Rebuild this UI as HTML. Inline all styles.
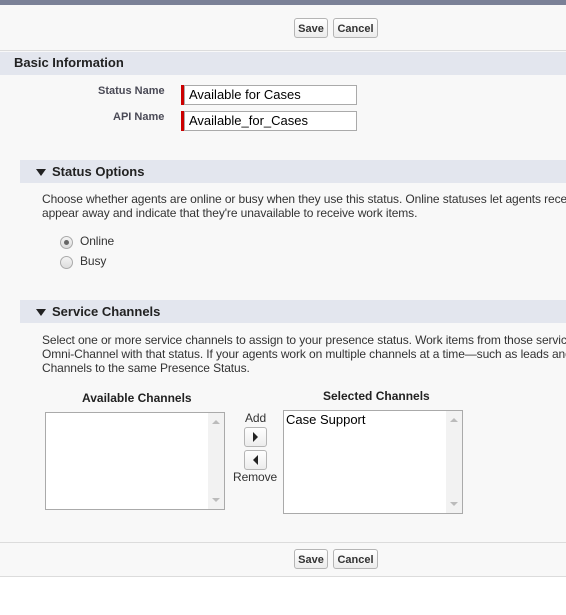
<!DOCTYPE html>
<html><head><style>
html,body{margin:0;width:566px;height:615px;overflow:hidden}
body{background:#fff;font-family:"Liberation Sans",Arial,sans-serif;color:#222;position:relative}
#w{position:absolute;left:0;top:0;width:566px;height:615px;overflow:hidden}
.a{position:absolute;white-space:nowrap}
.bg{position:absolute;left:0;top:0;width:566px;height:577px;background:#f8f8f8}
.btn{position:absolute;height:20px;border:1px solid #b5b5b5;border-radius:3px;background:linear-gradient(#fff,#ececec);font-size:11px;font-weight:bold;color:#333;line-height:20px;text-align:center;box-sizing:border-box}
.band{position:absolute;background:#e3e6ee;height:23px}
.h{font-weight:bold;font-size:13px;color:#222}
.t{font-size:12px;color:#333;letter-spacing:-0.1px}
.inp{position:absolute;width:176px;height:20px;border:1px solid #aaa;background:#fff;box-sizing:border-box;font-size:13px;line-height:18px;padding-left:4px;color:#000}
.req{position:absolute;width:3px;height:20px;background:#c00}
.lbl{font-size:11px;font-weight:bold;color:#4a4a56}
.tri{display:inline-block;width:0;height:0;border-left:5px solid transparent;border-right:5px solid transparent;border-top:7px solid #222;vertical-align:middle;margin-right:6px}
.radio{position:absolute;width:11px;height:11px;border:1px solid #aaa;border-radius:50%;background:linear-gradient(#f4f4f4,#ddd)}
.box{position:absolute;border:1px solid #aaa;background:#fff;box-sizing:border-box}
.sb{position:absolute;right:0;top:0;bottom:0;width:16px;background:#f2f2f2}
.up,.dn{position:absolute;left:4px;width:0;height:0;border-left:4px solid transparent;border-right:4px solid transparent}
.up{top:7px;border-bottom:4px solid #bbb}
.dn{bottom:7px;border-top:4px solid #bbb}
.line{position:absolute;left:0;width:566px;height:1px;background:#dcdcdc}
</style></head><body><div id="w">
<div class="bg"></div>
<div class="a" style="left:0;top:0;width:566px;height:5px;background:#7b8197"></div>
<div class="btn" style="left:294px;top:18px;width:34px">Save</div>
<div class="btn" style="left:333px;top:18px;width:45px">Cancel</div>
<div class="line" style="top:50px"></div>
<div class="band" style="left:0;top:52px;width:566px"></div>
<div class="a h" style="left:14px;top:55px">Basic Information</div>
<div class="a lbl" style="left:98px;top:85px">Status Name</div>
<div class="req" style="left:181px;top:85px"></div>
<div class="inp" style="left:184px;top:85px;width:173px">Available for Cases</div>
<div class="a lbl" style="left:113px;top:111px">API Name</div>
<div class="req" style="left:181px;top:111px"></div>
<div class="inp" style="left:184px;top:111px;width:173px">Available_for_Cases</div>

<div class="band" style="left:20px;top:160px;width:546px"></div>
<div class="a h" style="left:36px;top:164px"><span class="tri"></span>Status Options</div>
<div class="a t" style="left:42px;top:192px;width:524px;overflow:hidden">Choose whether agents are online or busy when they use this status. Online statuses let agents receive work items.</div>
<div class="a t" style="left:42px;top:206px">appear away and indicate that they're unavailable to receive work items.</div>
<div class="radio" style="left:60px;top:236px"><div style="position:absolute;left:3px;top:3px;width:5px;height:5px;border-radius:50%;background:#666"></div></div>
<div class="a t" style="left:80px;top:234px">Online</div>
<div class="radio" style="left:60px;top:256px"></div>
<div class="a t" style="left:80px;top:254px">Busy</div>

<div class="band" style="left:20px;top:300px;width:546px"></div>
<div class="a h" style="left:36px;top:304px"><span class="tri"></span>Service Channels</div>
<div class="a t" style="left:42px;top:333px;width:524px;overflow:hidden">Select one or more service channels to assign to your presence status. Work items from those service channels are routed</div>
<div class="a t" style="left:42px;top:347px;width:524px;overflow:hidden">Omni-Channel with that status. If your agents work on multiple channels at a time—such as leads and cases—assign</div>
<div class="a t" style="left:42px;top:361px">Channels to the same Presence Status.</div>

<div class="a h" style="left:82px;top:391px;font-size:12px">Available Channels</div>
<div class="box" style="left:45px;top:412px;width:180px;height:98px"><div class="sb"><div class="up"></div><div class="dn"></div></div></div>
<div class="a h" style="left:323px;top:389px;font-size:12px">Selected Channels</div>
<div class="box" style="left:283px;top:410px;width:180px;height:104px"><div class="sb"><div class="up"></div><div class="dn"></div></div><div class="a" style="left:2px;top:1px;font-size:13px;color:#000">Case Support</div></div>
<div class="a t" style="left:245px;top:411px">Add</div>
<div class="btn" style="left:244px;top:427px;width:23px;height:20px"><span style="display:inline-block;border-top:5px solid transparent;border-bottom:5px solid transparent;border-left:5px solid #222;vertical-align:middle;margin-top:-2px"></span></div>
<div class="btn" style="left:244px;top:450px;width:23px;height:20px"><span style="display:inline-block;border-top:5px solid transparent;border-bottom:5px solid transparent;border-right:5px solid #222;vertical-align:middle;margin-top:-2px"></span></div>
<div class="a t" style="left:233px;top:470px">Remove</div>

<div class="line" style="top:542px"></div>
<div class="btn" style="left:294px;top:549px;width:34px">Save</div>
<div class="btn" style="left:333px;top:549px;width:45px">Cancel</div>
<div class="line" style="top:576px"></div>
</div></body></html>
